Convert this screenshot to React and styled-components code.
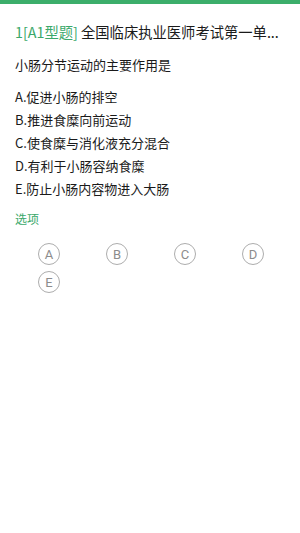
import React from "react";
import styled, { createGlobalStyle } from "styled-components";

const GlobalStyle = createGlobalStyle`
  body {
    margin: 0;
    background: #ffffff;
    font-family: "Noto Sans CJK SC", "Noto Sans", sans-serif;
  }
`;

const Page = styled.div`
  width: 300px;
  min-height: 533px;
  background: #fff;
`;

const TopBar = styled.div`
  height: 4px;
  background: #3cae6b;
`;

const Content = styled.div`
  padding: 16px 15px 0 15px;
`;

const Title = styled.div`
  font-size: 14.3px;
  line-height: 24px;
  color: #1a1a1a;
  white-space: nowrap;
`;

const Tag = styled.span`
  color: #3aa86a;
`;

const Question = styled.div`
  margin-top: 9px;
  font-size: 13px;
  line-height: 24px;
  color: #1a1a1a;
`;

const OptionList = styled.div`
  margin-top: 8px;
  display: flex;
  flex-direction: column;
`;

const Option = styled.div`
  font-size: 13px;
  line-height: 23px;
  color: #1a1a1a;
`;

const SectionLabel = styled.div`
  margin-top: 9px;
  font-size: 12px;
  line-height: 20px;
  color: #3aa86a;
`;

const ChoiceGrid = styled.div`
  margin-top: 11px;
  display: grid;
  grid-template-columns: repeat(4, 1fr);
  grid-auto-rows: 28px;
  width: 272px;
`;

const Cell = styled.div`
  display: flex;
  align-items: center;
  justify-content: center;
`;

const Circle = styled.div`
  width: 20px;
  height: 20px;
  border: 1px solid #adadad;
  border-radius: 50%;
  display: flex;
  align-items: center;
  justify-content: center;
  font-family: "Roboto", "Liberation Sans", sans-serif;
  font-size: 13px;
  color: #8c8c8c;
`;

const options = [
  "A.促进小肠的排空",
  "B.推进食糜向前运动",
  "C.使食糜与消化液充分混合",
  "D.有利于小肠容纳食糜",
  "E.防止小肠内容物进入大肠",
];

const letters = ["A", "B", "C", "D", "E"];

export default function App() {
  return (
    <>
      <GlobalStyle />
      <Page>
        <TopBar />
        <Content>
          <Title>
            <Tag>1[A1型题]</Tag> 全国临床执业医师考试第一单...
          </Title>
          <Question>小肠分节运动的主要作用是</Question>
          <OptionList>
            {options.map((o) => (
              <Option key={o}>{o}</Option>
            ))}
          </OptionList>
          <SectionLabel>选项</SectionLabel>
          <ChoiceGrid>
            {letters.map((l) => (
              <Cell key={l}>
                <Circle>{l}</Circle>
              </Cell>
            ))}
          </ChoiceGrid>
        </Content>
      </Page>
    </>
  );
}
